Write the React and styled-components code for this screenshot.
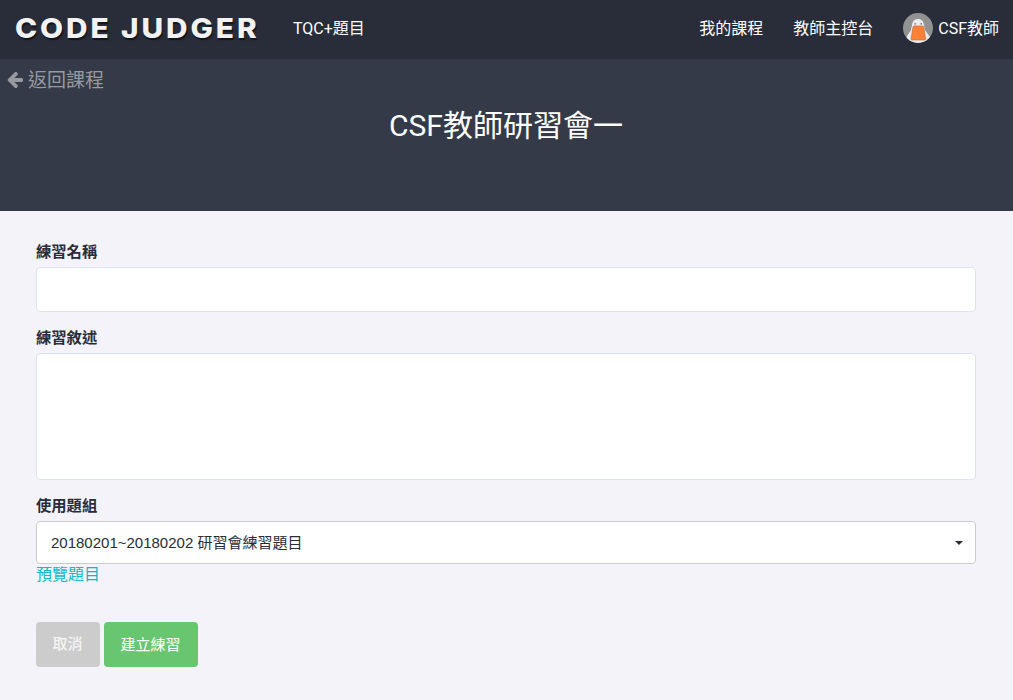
import React from "react";
import styled, { createGlobalStyle } from "styled-components";

const GlobalStyle = createGlobalStyle`
  *, *::before, *::after { box-sizing: border-box; }
  body {
    margin: 0;
    background: #f4f3f9;
    color: #282d39;
    font-family: Roboto, "Noto Sans CJK TC", sans-serif;
    font-size: 16px;
  }
`;

const Page = styled.div`
  min-height: 700px;
  overflow: hidden;
`;

const Navbar = styled.nav`
  display: flex;
  align-items: center;
  height: 59px;
  padding: 0 14px 3px 15px;
  background: #282d39;
`;

const Brand = styled.a`
  width: 278px;
  color: #f2f2f2;
  font: 800 27.5px/36px Inter, sans-serif;
  letter-spacing: 2.7px;
  white-space: nowrap;
  text-shadow: 1px 2px 1px #12151b;
  transform: scaleX(1.083);
  transform-origin: left;
`;

const NavLink = styled.a`
  display: flex;
  align-items: center;
  color: #fff;
  line-height: 24px;
  white-space: nowrap;
  margin-left: ${({ $gap }) => $gap || 0};
`;

const NavText = styled.span`
  padding-top: 2px;
`;

const NavEnd = styled.div`
  display: flex;
  align-items: center;
  margin-left: auto;
`;

const Avatar = styled.svg`
  width: 30px;
  height: 30px;
  margin-right: 5px;
`;

const Hero = styled.header`
  height: 152px;
  padding-top: 8px;
  background: #343a48;
`;

const BackLink = styled.a`
  display: flex;
  align-items: center;
  gap: 5px;
  padding-left: 7px;
  height: 28px;
  color: #979b9f;
  font-size: 19px;
  line-height: 28px;
`;

const BackArrow = styled.svg`
  width: 16px;
  height: 16px;
  margin-top: -2px;
  fill: currentColor;
`;

const Title = styled.h1`
  margin: 8px 1px 0 0;
  color: #fff;
  font-size: 30px;
  font-weight: 400;
  line-height: 46px;
  text-align: center;
`;

const Form = styled.form`
  display: flex;
  flex-direction: column;
  align-items: stretch;
  padding: 30px 37px 0 36px;
`;

const Label = styled.label`
  height: 26px;
  font-size: 15.3px;
  font-weight: 700;
  line-height: 22px;
`;

const Input = styled.input`
  height: 45px;
  margin: 0 0 15px;
  border: 1px solid #dde3ec;
  border-radius: 4px;
  background: #fff;
`;

const TextArea = styled.textarea`
  height: 127px;
  margin: 0 0 15px;
  border: 1px solid #dde3ec;
  border-radius: 4px;
  background: #fff;
  resize: none;
`;

const Select = styled.button`
  display: flex;
  align-items: center;
  justify-content: space-between;
  height: 43px;
  padding: 0 12px 0 14px;
  border: 1px solid #ccc;
  border-radius: 4px;
  background: #fff;
  color: #282d39;
  font: 15px/22px "Liberation Sans", "Noto Sans CJK TC", sans-serif;
`;

const Caret = styled.span`
  border: 4px solid transparent;
  border-top-color: #282d39;
  border-bottom: 0;
`;

const Preview = styled.a`
  align-self: flex-start;
  height: 22px;
  color: #10b9c4;
  line-height: 22px;
`;

const Actions = styled.div`
  display: flex;
  gap: 4px;
  margin-top: 36px;
`;

const Button = styled.button`
  width: ${({ $width }) => $width};
  height: 45px;
  padding: 0 1px ${({ $lift }) => $lift || 0} 0;
  border: 0;
  border-radius: 4px;
  background: ${({ $color }) => $color};
  color: ${({ $text }) => $text || "#fff"};
  font: ${({ $weight }) => $weight || 400} 15px/22px Roboto, "Noto Sans CJK TC", sans-serif;
`;

function GooseAvatar() {
  return (
    <Avatar viewBox="0 0 30 30">
      <defs>
        <clipPath id="avatar-round">
          <circle cx="15" cy="15" r="15" />
        </clipPath>
      </defs>
      <g clipPath="url(#avatar-round)">
        <rect width="30" height="30" fill="#929292" />
        <path
          d="M15 6C11.3 6 9.5 8.2 9 12L7.8 17.5L3.5 24V30H27V24L22.2 17.5L21 12C20.5 8.2 18.7 6 15 6Z"
          fill="#ececec"
        />
        <path
          d="M11 13H19.8Q20.6 13 20.8 14L22.6 25.8Q22.7 27 21.7 27H9Q7.9 27 8.1 25.8L10 14Q10.2 13 11 13Z"
          fill="#ff8137"
          stroke="#b9683a"
          strokeWidth=".6"
        />
        <circle cx="12.2" cy="10.8" r=".9" fill="#777" />
        <circle cx="18.2" cy="10.8" r=".9" fill="#777" />
      </g>
    </Avatar>
  );
}

export default function App() {
  return (
    <Page>
      <GlobalStyle />
      <Navbar>
        <Brand>CODE JUDGER</Brand>
        <NavLink>
          <NavText>TQC+題目</NavText>
        </NavLink>
        <NavEnd>
          <NavLink>
            <NavText>我的課程</NavText>
          </NavLink>
          <NavLink $gap="30px">
            <NavText>教師主控台</NavText>
          </NavLink>
          <NavLink $gap="30px">
            <GooseAvatar />
            <NavText>CSF教師</NavText>
          </NavLink>
        </NavEnd>
      </Navbar>
      <Hero>
        <BackLink>
          <BackArrow viewBox="0 0 1536 1536">
            <path d="M1536 704v128q0 53-32.5 90.5t-84.5 37.500h-704l293 294q38 36 38 90t-38 90l-75 76q-37 37-90 37-52 0-91-37l-651-652q-37-37-37-90 0-52 37-91l651-650q38-38 91-38 52 0 90 38l75 74q38 38 38 91t-38 91l-293 293h704q52 0 84.500 37.500t32.500 90.500z" />
          </BackArrow>
          返回課程
        </BackLink>
        <Title>CSF教師研習會一</Title>
      </Hero>
      <Form>
        <Label htmlFor="name">練習名稱</Label>
        <Input id="name" />
        <Label htmlFor="description">練習敘述</Label>
        <TextArea id="description" />
        <Label>使用題組</Label>
        <Select type="button">
          20180201~20180202 研習會練習題目
          <Caret />
        </Select>
        <Preview>預覽題目</Preview>
        <Actions>
          <Button type="button" $width="64px" $color="#ccc" $text="#f5f5f5" $weight={500} $lift="2px">
            取消
          </Button>
          <Button type="button" $width="94px" $color="#68c671">
            建立練習
          </Button>
        </Actions>
      </Form>
    </Page>
  );
}
